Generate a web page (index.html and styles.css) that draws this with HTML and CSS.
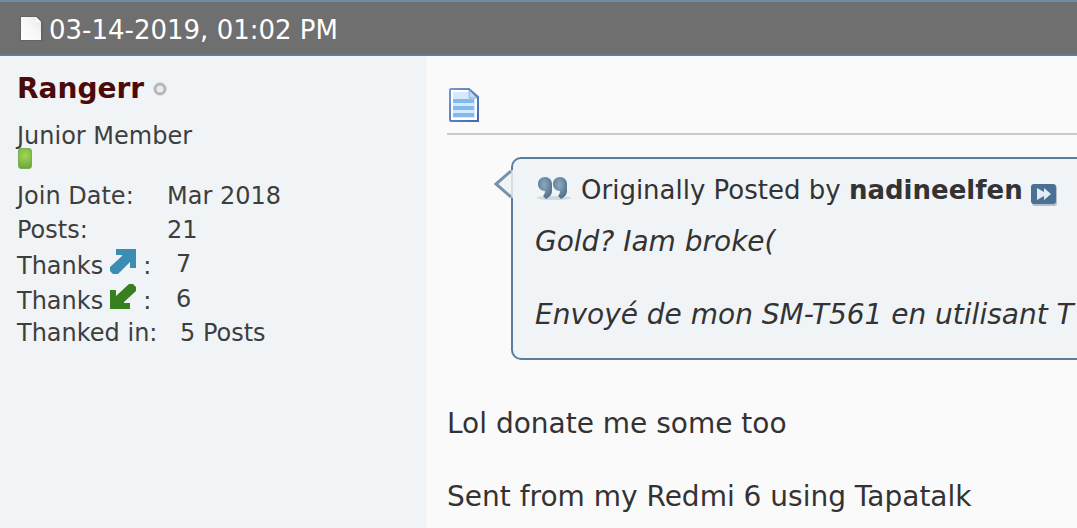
FILE: index.html
```html
<!DOCTYPE html>
<html lang="en">
<head>
<meta charset="utf-8">
<meta name="viewport" content="width=device-width, initial-scale=1">
<title>Forum post</title>
<link rel="stylesheet" href="styles.css">
</head>
<body>
<article class="post">
  <header class="post-head">
    <svg class="icon-page" width="24" height="28" viewBox="0 0 24 28" aria-hidden="true">
      <defs><linearGradient id="paper" x1="1" y1="0" x2="0" y2="1"><stop offset="0" stop-color="#e4e4e4"/><stop offset=".4" stop-color="#f6f6f6"/><stop offset="1" stop-color="#fff"/></linearGradient></defs>
      <path d="M0 1h17l6 6v19H0z" fill="#646464"/>
      <path d="M1 2h15l5 5v18H1z" fill="url(#paper)"/>
      <path d="M16 2l5 5h-5z" fill="#fff"/>
    </svg>
    <time datetime="2019-03-14T13:02">03-14-2019, 01:02 PM</time>
  </header>
  <div class="post-body">
    <aside class="user">
      <div class="user-name">
        <a class="name" href="#">Rangerr</a>
        <svg width="14" height="14" viewBox="0 0 14 14" role="img" aria-label="Offline"><circle cx="7" cy="7" r="5" fill="#ececec" stroke="#b6b6b6" stroke-width="3"/></svg>
      </div>
      <div class="rank">Junior Member</div>
      <div class="reputation"></div>
      <dl class="stats">
        <div class="stat"><dt>Join Date:</dt><dd>Mar 2018</dd></div>
        <div class="stat"><dt>Posts:</dt><dd>21</dd></div>
        <div class="stat thanks"><dt>Thanks
          <svg class="arrow" width="26" height="25" viewBox="0 0 26 25" aria-hidden="true"><path d="M6 0h20v19h-6v-6L8 25H3L0 22v-4L12 7V6H6z" fill="#3c8cb4"/></svg>
          :</dt><dd>7</dd></div>
        <div class="stat thanks"><dt>Thanks
          <svg class="arrow" width="26" height="25" viewBox="0 0 26 25" aria-hidden="true"><path d="M20 25H0V6h6v6L19 0h4l3 3v4L14 18v1h6z" fill="#36801f"/></svg>
          :</dt><dd>6</dd></div>
        <div class="stat thanked"><dt>Thanked in:</dt><dd>5 Posts</dd></div>
      </dl>
    </aside>
    <section class="content">
      <div class="title-row">
        <svg width="32" height="36" viewBox="0 0 32 36" aria-hidden="true">
          <defs><linearGradient id="edge" x1="0" y1="0" x2="1" y2="1"><stop offset="0" stop-color="#7895cf"/><stop offset="1" stop-color="#4268b3"/></linearGradient></defs>
          <path d="M4 2h18l9 8v24H4q-1 0-1-1V3q0-1 1-1z" fill="#fff" stroke="url(#edge)" stroke-width="2"/>
          <path d="M6 5h15v6h7v20H6z" fill="#d7eafd"/>
          <path d="M6 12h21v4H6zM6 19h21v4H6zM6 26h21v4H6z" fill="#80baf0"/>
          <path d="M22 3l8 8h-8z" fill="#c5daf7" stroke="#8aa8dd"/>
        </svg>
      </div>
      <blockquote class="quote">
        <svg class="pointer" width="20" height="28" viewBox="0 0 20 28" aria-hidden="true"><path d="M20 0v28L2 14 17 1z" fill="#f0f4f7"/><path d="M18 1L3 14l15 13" fill="none" stroke="#7593ac" stroke-width="3"/><path d="M19 0v28" stroke="#b5c8d8"/></svg>
        <div class="quote-by">
          <svg class="marks" width="36" height="26" viewBox="0 0 36 26" aria-hidden="true">
            <defs>
              <radialGradient id="ink" cx=".45" cy=".35" r=".65"><stop offset="0" stop-color="#8faabd"/><stop offset=".5" stop-color="#6f8ca4"/><stop offset="1" stop-color="#4f6e88"/></radialGradient>
              <path id="mark" d="M7 1C3 1 0 4 0 8c0 4 3 7 7 7 0 2-1 4-2 5l3 3c4-2 6-5 6-8 0-2 0-3 0-7 0-4-3-7-7-7z"/>
            </defs>
            <ellipse cx="17" cy="22" rx="17" ry="2" fill="#d3d8dc"/>
            <use href="#mark" x="1" fill="url(#ink)"/>
            <use href="#mark" x="16" fill="url(#ink)"/>
          </svg>
          <span>Originally Posted by <strong>nadineelfen</strong></span>
          <a class="view" href="#" aria-label="View post"><svg width="26" height="22" viewBox="0 0 26 22" aria-hidden="true"><rect x="1" y="1" width="25" height="21" rx="3" fill="#b4bfc9"/><rect width="25" height="20" rx="3" fill="#4a7194"/><path d="M6 4l7 4V4l7 6-7 6v-4l-7 4z" fill="#e2ecf4"/></svg></a>
        </div>
        <p class="quote-text">Gold? Iam broke(</p>
        <p class="quote-text">Envoyé de mon SM-T561 en utilisant T</p>
      </blockquote>
      <p class="message">Lol donate me some too</p>
      <p class="message">Sent from my Redmi 6 using Tapatalk</p>
    </section>
  </div>
</article>
</body>
</html>
```
FILE: styles.css
```css
* { box-sizing: border-box; }
svg { flex-shrink: 0; }
body {
  margin: 0;
  background: #fafafa;
  color: #333;
  font-family: Verdana, "DejaVu Sans", sans-serif;
  font-size: 28px;
  line-height: 36px;
  overflow: hidden;
}
.post { display: flex; flex-direction: column; min-height: 100vh; }
.post-head {
  display: flex;
  align-items: center;
  gap: 5px;
  padding: 10px 20px 6px;
  background: #6f6f6f;
  border-top: 2px solid #6d8ba5;
  border-bottom: 2px solid #5f7f9b;
  color: #fff;
  font-size: 26px;
}
.icon-page { margin-bottom: 2px; }
.post-body { display: flex; flex: 1; }
.user {
  flex: 0 0 426px;
  padding: 16px 17px;
  background: #f0f4f7;
  border-right: 1px solid #eee;
  color: #3e3e3e;
  font-size: 24px;
  line-height: 34px;
}
.user-name { display: flex; align-items: center; gap: 9px; }
.name { color: #4c0b08; font-size: 28px; font-weight: bold; text-decoration: none; }
.rank { margin-top: 15px; line-height: 30px; }
.reputation {
  width: 14px;
  height: 21px;
  margin: -3px 0 10px 1px;
  border: 1px solid #78b04d;
  border-radius: 3px;
  background: radial-gradient(circle at 50% 35%, #a1d84f, #69a23e);
}
.stats { margin: 0; }
.stat { display: flex; }
.stat dt { width: 150px; white-space: nowrap; }
.stat dd { margin: 0; }
.thanks dt { display: flex; align-items: center; gap: 7px; width: 159px; padding-top: 2px; line-height: 32px; }
.arrow { margin-bottom: 8px; }
.thanked dt { width: 163px; }
.thanked { line-height: 32px; }
.content { flex: 1; min-width: 0; padding: 31px 0 0 21px; }
.title-row { display: flex; padding-bottom: 10px; border-bottom: 2px solid #c8c8c8; }
.quote {
  position: relative;
  margin: 22px 0 46px 64px;
  padding: 13px 0 25px 22px;
  border: 2px solid #5b7d9b;
  border-right: 0;
  border-radius: 10px 0 0 10px;
  background: #f0f4f7;
  white-space: nowrap;
}
.pointer { position: absolute; left: -20px; top: 11px; }
.quote-by { display: flex; align-items: center; padding-left: 2px; gap: 8px; font-size: 26px; }
.marks { margin-bottom: 2px; }
.view { display: flex; padding-top: 10px; }
.quote-text { margin: 16px 0 37px; font-style: italic; }
.quote-text:last-child { margin: 0; }
.message { margin: 0 0 37px; }
```
